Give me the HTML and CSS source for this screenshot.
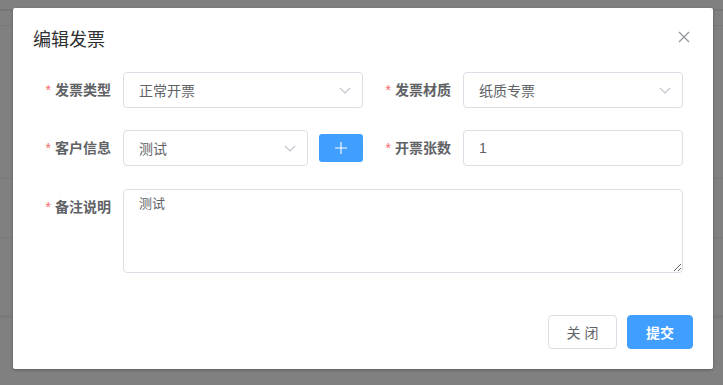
FILE: index.html
```html
<!DOCTYPE html>
<html lang="zh-CN">
<head>
  <meta charset="UTF-8" />
  <title>编辑发票</title>
  <link rel="stylesheet" href="styles.css">
</head>
<body>

  <div class="overlay">
    <div class="dialog">
      <div class="dialog-header">
        <span class="dialog-title">编辑发票</span>
        <button class="dialog-close" aria-label="Close">
          <svg width="12" height="12" viewBox="0 0 12 12"><path d="M1 1L11 11M11 1L1 11" stroke="#909399" stroke-width="1.2" fill="none"/></svg>
        </button>
      </div>

      <form class="dialog-body">
        <div class="form-row">
          <div class="form-item">
            <label class="form-label required">发票类型</label>
            <div class="select w-240">
              <span>正常开票</span>
              <svg class="arrow" width="12" height="7" viewBox="0 0 12 7"><path d="M1 1L6 6L11 1" stroke="#C0C4CC" stroke-width="1.2" fill="none"/></svg>
            </div>
          </div>
          <div class="form-item col-right">
            <label class="form-label required">发票材质</label>
            <div class="select w-220">
              <span>纸质专票</span>
              <svg class="arrow" width="12" height="7" viewBox="0 0 12 7"><path d="M1 1L6 6L11 1" stroke="#C0C4CC" stroke-width="1.2" fill="none"/></svg>
            </div>
          </div>
        </div>

        <div class="form-row">
          <div class="form-item">
            <label class="form-label required">客户信息</label>
            <div class="select w-185">
              <span>测试</span>
              <svg class="arrow" width="12" height="7" viewBox="0 0 12 7"><path d="M1 1L6 6L11 1" stroke="#C0C4CC" stroke-width="1.2" fill="none"/></svg>
            </div>
            <button type="button" class="btn-add">
              <svg width="12" height="12" viewBox="0 0 12 12"><path d="M6 0V12M0 6H12" stroke="#fff" stroke-width="1.1"/></svg>
            </button>
          </div>
          <div class="form-item col-right">
            <label class="form-label required">开票张数</label>
            <div class="input w-220">1</div>
          </div>
        </div>

        <div class="form-row">
          <div class="form-item top">
            <label class="form-label required">备注说明</label>
            <textarea class="textarea">测试</textarea>
          </div>
        </div>
      </form>

      <div class="dialog-footer">
        <button class="btn">关 闭</button>
        <button class="btn btn-primary">提交</button>
      </div>
    </div>
  </div>

</body>
</html>
```

FILE: styles.css
```css
body {
  margin: 0;
  font-family: "Liberation Sans", "Noto Sans CJK SC", sans-serif;
  background: #808080;
  height: 385px;
  overflow: hidden;
}

/* faint table lines of the page behind the mask */
.overlay {
  height: 385px;
  padding-top: 8px;
  box-sizing: border-box;
  background:
    linear-gradient(#767676, #767676) 0 9px / 100% 2px no-repeat,
    linear-gradient(#787878, #787878) 0 25px / 100% 1px no-repeat,
    linear-gradient(#787878, #787878) 0 178px / 100% 1px no-repeat,
    linear-gradient(#787878, #787878) 0 237px / 100% 1px no-repeat,
    linear-gradient(#7a7a7a, #7a7a7a) 0 315px / 100% 3px no-repeat,
    #808080;
}

.dialog {
  width: 700px;
  height: 361px;
  margin-left: 13px;
  background: #fff;
  border-radius: 2px;
  box-shadow: 0 1px 3px rgba(0,0,0,0.3);
  box-sizing: border-box;
  display: flex;
  flex-direction: column;
}

.dialog-header {
  padding: 20px 20px 10px;
  display: flex;
  justify-content: space-between;
  align-items: flex-start;
}

.dialog-title {
  font-size: 18px;
  line-height: 24px;
  color: #303133;
}

.dialog-close {
  border: none;
  background: none;
  padding: 0;
  margin-top: 2px;
  margin-right: 2px;
  width: 14px;
  height: 14px;
  display: flex;
  align-items: center;
  justify-content: center;
  cursor: pointer;
}

.dialog-body {
  padding: 10px 20px 0;
  margin: 0;
}

.form-row {
  display: flex;
  margin-bottom: 22px;
}

.form-row:nth-child(2) {
  margin-bottom: 23px;
}

.form-item {
  display: flex;
  align-items: center;
  width: 330px;
}

.form-item.top {
  align-items: flex-start;
  width: 650px;
}

.col-right {
  margin-left: 10px;
}

.form-label {
  width: 90px;
  padding-right: 12px;
  box-sizing: border-box;
  text-align: right;
  font-size: 14px;
  font-weight: bold;
  color: #606266;
  line-height: 36px;
  flex-shrink: 0;
}

.form-label.required::before {
  content: "*";
  color: #F56C6C;
  margin-right: 4px;
  font-weight: normal;
}

.select,
.input {
  height: 36px;
  border: 1px solid #DCDFE6;
  border-radius: 4px;
  box-sizing: border-box;
  padding: 0 15px;
  font-size: 14px;
  color: #606266;
  display: flex;
  align-items: center;
  justify-content: space-between;
}

.select .arrow {
  margin-right: -4px;
}

.w-240 { width: 240px; }
.w-220 { width: 220px; }
.w-185 { width: 185px; }

.btn-add {
  width: 44px;
  height: 28px;
  margin-left: 11px;
  border: none;
  border-radius: 3px;
  background: #409EFF;
  display: flex;
  align-items: center;
  justify-content: center;
  padding: 0;
}

.textarea {
  width: 560px;
  height: 84px;
  border: 1px solid #DCDFE6;
  border-radius: 4px;
  box-sizing: border-box;
  padding: 5px 15px;
  font-family: inherit;
  font-size: 13px;
  line-height: 18px;
  color: #606266;
  resize: vertical;
  outline: none;
}

.dialog-footer {
  margin-top: auto;
  padding: 20px;
  display: flex;
  justify-content: flex-end;
  gap: 10px;
}

.btn {
  height: 34px;
  width: 69px;
  border: 1px solid #DCDFE6;
  border-radius: 4px;
  background: #fff;
  color: #606266;
  font-family: inherit;
  font-size: 14px;
  cursor: pointer;
}

.btn-primary {
  width: 66px;
  background: #409EFF;
  border-color: #409EFF;
  color: #fff;
  font-weight: bold;
}
```
